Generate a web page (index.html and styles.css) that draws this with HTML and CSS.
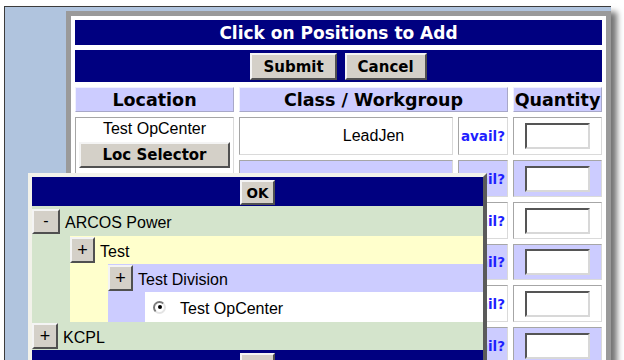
FILE: index.html
```html
<!DOCTYPE html>
<html lang="en">
<head>
    <meta charset="UTF-8">
    <title>Click on Positions to Add</title>
    <link rel="stylesheet" href="styles.css">
</head>
<body>
    <div class="screen">
        <!-- Main positions form -->
        <div class="panel">
            <div class="grid">
                <div class="title">Click on Positions to Add</div>
                <div class="actions">
                    <button class="btn">Submit</button>
                    <button class="btn">Cancel</button>
                </div>

                <div class="head">Location</div>
                <div class="head head-wide">Class / Workgroup</div>
                <div class="head">Quantity</div>

                <div class="cell loc">
                    <span class="loc-name">Test OpCenter</span>
                    <button class="btn btn-block">Loc Selector</button>
                </div>

                <div class="cell job">LeadJen</div>
                <div class="cell"><span class="avail">avail?</span></div>
                <div class="cell"><input class="qty" type="text"></div>

                <div class="cell alt"></div>
                <div class="cell alt"><span class="avail">avail?</span></div>
                <div class="cell alt"><input class="qty" type="text"></div>

                <div class="cell"></div>
                <div class="cell"><span class="avail">avail?</span></div>
                <div class="cell"><input class="qty" type="text"></div>

                <div class="cell alt"></div>
                <div class="cell alt"><span class="avail">avail?</span></div>
                <div class="cell alt"><input class="qty" type="text"></div>

                <div class="cell"></div>
                <div class="cell"><span class="avail">avail?</span></div>
                <div class="cell"><input class="qty" type="text"></div>

                <div class="cell alt"></div>
                <div class="cell alt"><span class="avail">avail?</span></div>
                <div class="cell alt"><input class="qty" type="text"></div>
            </div>
        </div>

        <!-- Location selector popup -->
        <div class="popup">
            <div class="popup-bar">
                <button class="btn btn-ok">OK</button>
            </div>

            <div class="node green">
                <div class="node-row tall">
                    <button class="btn toggle toggle-minus">-</button>
                    <span class="node-label">ARCOS Power</span>
                </div>
                <div class="node-kids">
                    <div class="node yellow">
                        <div class="node-row">
                            <button class="btn toggle">+</button>
                            <span class="node-label">Test</span>
                        </div>
                        <div class="node-kids">
                            <div class="node lavender">
                                <div class="node-row">
                                    <button class="btn toggle">+</button>
                                    <span class="node-label">Test Division</span>
                                </div>
                                <div class="node-kids kids-last">
                                    <div class="leaf">
                                        <span class="radio"></span>
                                        <span class="node-label leaf-label">Test OpCenter</span>
                                    </div>
                                </div>
                            </div>
                        </div>
                    </div>
                </div>
            </div>

            <div class="node green">
                <div class="node-row">
                    <button class="btn toggle toggle-kcpl">+</button>
                    <span class="node-label">KCPL</span>
                </div>
            </div>

            <div class="popup-bar">
                <button class="btn btn-ok">OK</button>
            </div>
        </div>
    </div>
</body>
</html>
```
FILE: styles.css
```css
/* Reset */
* {
    box-sizing: border-box;
    margin: 0;
    padding: 0;
}

html, body {
    height: 100%;
    overflow: hidden;
}

body {
    background: #fff;
    font-family: 'Liberation Sans', Arial, sans-serif;
    font-size: 16px;
    line-height: 18px;
    color: #000;
}

/* Screenshot frame */
.screen {
    position: relative;
    width: 607px;
    height: 400px;
    margin: 6px 0 0 4px;
    padding: 4px 0 0 61px;
    background: #b0c4de;
    border-top: 1px solid #3c3c3c;
    border-left: 1px solid #3c3c3c;
    box-shadow: 6px 6px 6px rgba(0, 0, 0, 0.55);
}

/* Panel */
.panel {
    width: 545px;
    padding: 4px;
    background: #fff;
    border: 5px solid #9a9a9a;
}

.grid {
    display: grid;
    grid-template-columns: 159px 214px 50px 89px;
    grid-template-rows: 25px 32px 25px 38px 37px 37px 36px 37px 37px;
    gap: 5px;
}

.title {
    grid-column: 1 / -1;
    display: flex;
    align-items: center;
    justify-content: center;
    background: #000080;
    color: #fff;
    font-family: 'DejaVu Sans', Verdana, sans-serif;
    font-weight: bold;
    font-size: 17px;
}

.actions {
    grid-column: 1 / -1;
    display: flex;
    justify-content: center;
    align-items: flex-start;
    gap: 8px;
    padding-top: 3px;
    background: #000080;
}

/* Buttons */
.btn {
    height: 27px;
    padding: 0 11px;
    background: #d4d0c8;
    color: #000;
    border: 2px solid;
    border-color: #f4f4f4 #505050 #505050 #f4f4f4;
    font-family: 'DejaVu Sans', Verdana, sans-serif;
    font-weight: bold;
    font-size: 15px;
    cursor: pointer;
}

.btn-block {
    display: block;
    width: 100%;
    height: 26px;
    margin-top: 4px;
}

.btn-ok {
    height: 25px;
    padding: 0 5px;
    font-size: 13.5px;
}

/* Header cells */
.head {
    display: flex;
    align-items: center;
    justify-content: center;
    background: #ccccff;
    border: 1px solid;
    border-color: #f0f0ff #a8a8c8 #a8a8c8 #f0f0ff;
    font-family: 'DejaVu Sans', Verdana, sans-serif;
    font-weight: bold;
    font-size: 17.5px;
}

.head-wide {
    grid-column: span 2;
}

/* Body cells */
.cell {
    display: flex;
    align-items: center;
    justify-content: center;
    background: #fff;
    border: 1px solid;
    border-color: #a6a6a6 #dadada #dadada #a6a6a6;
}

.cell.alt {
    background: #ccccff;
}

.loc {
    grid-row: span 6;
    flex-direction: column;
    justify-content: flex-start;
    padding: 2px 3px 0;
}

.loc-name {
    display: block;
}

.job {
    padding-left: 55px;
}

.avail {
    color: #1f1fff;
    font-family: 'DejaVu Sans', Verdana, sans-serif;
    font-weight: bold;
    font-size: 13.5px;
    cursor: pointer;
}

.qty {
    width: 65px;
    height: 26px;
    background: #fff;
    border: 2px solid;
    border-color: #555 #d8d8d8 #d8d8d8 #555;
}

/* Popup tree */
.popup {
    position: absolute;
    left: 23px;
    top: 166px;
    width: 459px;
    background: #fff;
    border: 4px solid;
    border-color: #f2f2ea #5a5a5a #5a5a5a #f2f2ea;
}

.popup-bar {
    display: flex;
    justify-content: center;
    align-items: flex-start;
    height: 29px;
    padding-top: 3px;
    background: #000080;
}

.green {
    background: #d4e4cc;
}

.yellow {
    background: #ffffcc;
}

.lavender {
    background: #ccccff;
}

.node-row {
    display: flex;
    align-items: center;
    height: 28px;
}

.node-row.tall {
    height: 30px;
}

.node-kids {
    padding-left: 38px;
}

.kids-last {
    padding-left: 37px;
}

.toggle {
    width: 25px;
    height: 26px;
    padding: 0;
    font-family: 'Liberation Sans', Arial, sans-serif;
    font-weight: normal;
    font-size: 18px;
}

.toggle-minus {
    width: 28px;
    height: 25px;
    font-size: 16px;
}

.toggle-kcpl {
    width: 26px;
}

.node-label {
    margin-left: 5px;
    padding-top: 4px;
}

.leaf {
    display: flex;
    align-items: center;
    height: 30px;
    background: #fff;
}

.radio {
    position: relative;
    width: 13px;
    height: 13px;
    margin-left: 8px;
    border-radius: 50%;
    background: #fff;
    border: 2px solid;
    border-color: #7a7a7a #e4e4e4 #e4e4e4 #7a7a7a;
}

.radio::after {
    content: "";
    position: absolute;
    left: 2.5px;
    top: 2.5px;
    width: 4px;
    height: 4px;
    border-radius: 50%;
    background: #000;
}

.leaf-label {
    margin-left: 14px;
}
```
